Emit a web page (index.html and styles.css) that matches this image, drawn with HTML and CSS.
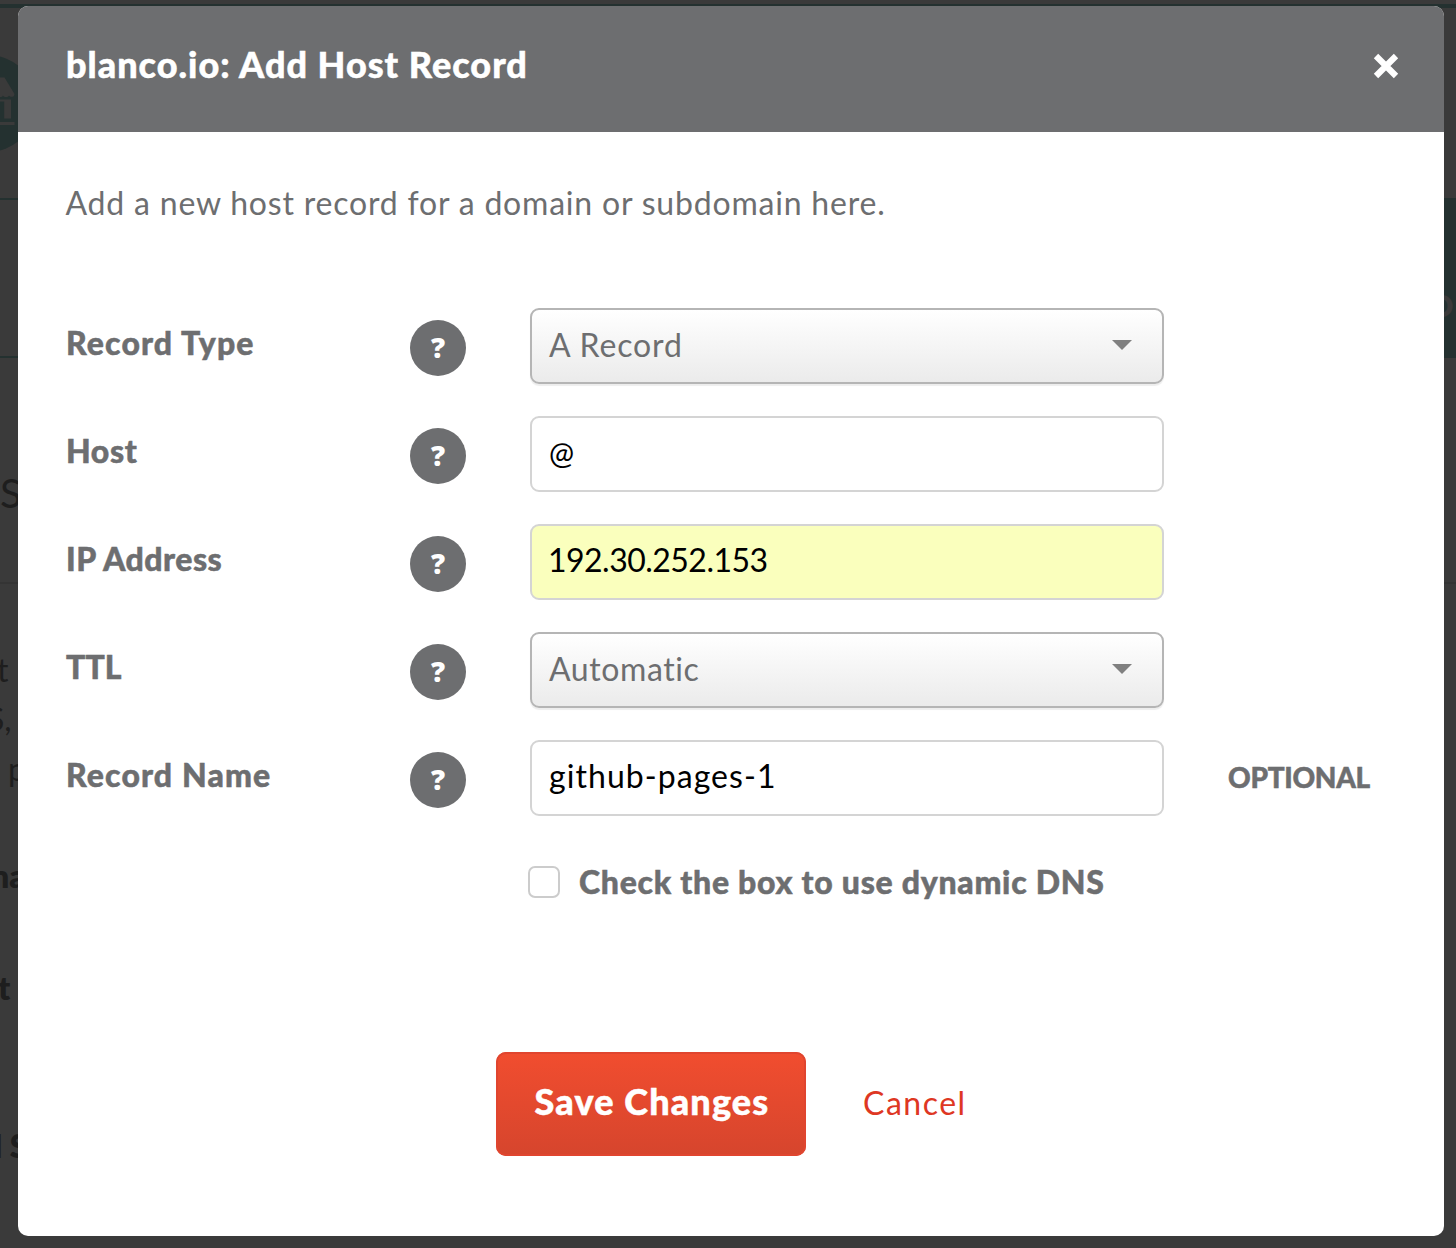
FILE: index.html
```html
<!DOCTYPE html>
<html lang="en">
<head>
<meta charset="utf-8">
<title>Add Host Record</title>
<link rel="stylesheet" href="styles.css">
</head>
<body>
<div class="page" aria-hidden="true">
  <div class="page-top">
    <svg class="shop" width="18" height="100" viewBox="0 0 18 100">
      <circle cx="-12" cy="49.5" r="48.4" fill="#243130"/>
      <path d="M-12 23.5H4.5L14.5 40C14.5 43.5 10 43.5 9 41.5C8 43.5 4 43.5 3 41.5C2 43.5-1 43.5-2 41.5H-12Z" fill="#3a3a3a"/>
      <path d="M-2 45.5H11V64.5H4.2V47.5H-2ZM-12 68H14.5V71H-12Z" fill="#3a3a3a"/>
    </svg>
  </div>
  <div class="page-tabs"><span class="page-tab">O&thinsp;M</span></div>
  <div class="page-title">S</div>
  <div class="page-text">
    <p class="line line-a">t</p>
    <p class="line line-b">S,</p>
    <p class="line line-c">p</p>
    <p class="line line-d">na</p>
    <p class="line line-e">t</p>
    <p class="line line-f">l S</p>
  </div>
</div>
<main class="modal" role="dialog">
  <header class="modal-head">
    <h1 class="title">blanco.io: Add Host Record</h1>
    <svg class="close" width="26" height="26" viewBox="0 0 26 26"><path d="M3 3L23 23M23 3L3 23" stroke="#fff" stroke-width="6.2"/></svg>
  </header>
  <div class="modal-body">
    <p class="intro">Add a new host record for a domain or subdomain here.</p>
    <form class="form">
      <div class="row">
        <label class="label wide">Record Type</label><span class="help">?</span>
        <div class="field select"><span class="value-a">A Record</span><svg width="20" height="10" viewBox="0 0 20 10"><path d="M0 0H20L10 10Z" fill="#808080"/></svg></div>
      </div>
      <div class="row">
        <label class="label host">Host</label><span class="help">?</span>
        <input class="field at" type="text" value="@">
      </div>
      <div class="row">
        <label class="label ip">IP Address</label><span class="help">?</span>
        <input class="field filled" type="text" value="192.30.252.153">
      </div>
      <div class="row">
        <label class="label ttl">TTL</label><span class="help">?</span>
        <div class="field select"><span class="value-b">Automatic</span><svg width="20" height="10" viewBox="0 0 20 10"><path d="M0 0H20L10 10Z" fill="#808080"/></svg></div>
      </div>
      <div class="row">
        <label class="label wide">Record Name</label><span class="help">?</span>
        <input class="field name" type="text" value="github-pages-1">
        <span class="optional">OPTIONAL</span>
      </div>
      <label class="check"><input class="box" type="checkbox"><span>Check the box to use dynamic DNS</span></label>
    </form>
    <div class="actions">
      <button class="save" type="button">Save Changes</button>
      <a class="cancel">Cancel</a>
    </div>
  </div>
</main>
</body>
</html>
```
FILE: styles.css
```css
* { box-sizing: border-box; }
body {
  margin: 0;
  width: 1456px;
  height: 1248px;
  overflow: hidden;
  position: relative;
  background: #3a3a3a;
  font-family: Lato, "Open Sans", sans-serif;
  color: #6d6e70;
}
p, h1 { margin: 0; }

/* dimmed page under the dialog */
.page { color: #1e1e1e; padding-top: 4px; height: 1248px; overflow: hidden; white-space: nowrap; }
.page-top { height: 196px; border-top: 4px solid #243130; border-bottom: 2px solid #243130; padding-top: 46px; }
.shop { display: block; }
.page-tabs { height: 158px; border-bottom: 2px solid #243130; display: flex; justify-content: flex-end; }
.page-tab {
  width: 12px;
  height: 160px;
  margin-top: -2px;
  overflow: hidden;
  background: #243130;
  color: #3a3a3a;
  font-size: 30px;
  font-weight: 800;
  line-height: 214px;
  text-indent: -15px;
}
.page-title { height: 226px; border-bottom: 2px solid #343434; font-size: 40px; line-height: 50px; padding-top: 110px; }
.page-text { display: flex; flex-direction: column; font-size: 32px; line-height: 40px; }
.line-a { margin: 66px 0 0 -3px; }
.line-b { margin: 9px 0 0 -13px; }
.line-c { margin: 10px 0 0 8px; }
.line-d, .line-e, .line-f { font-weight: 800; }
.line-d { margin: 67px 0 0 -9px; }
.line-e { margin: 72px 0 0 -2px; }
.line-f { margin: 118px 0 0 -6px; }

.modal {
  position: absolute;
  left: 18px;
  top: 6px;
  width: 1426px;
  height: 1230px;
  border-radius: 10px;
  overflow: hidden;
  background: #fff;
}
.modal-head {
  height: 126px;
  padding: 36px 45px 0 48px;
  display: flex;
  justify-content: space-between;
  align-items: flex-start;
  background: #6d6e70;
}
.title { font-size: 36px; line-height: 44px; font-weight: 900; letter-spacing: 1.01px; color: #fff; }
.title, .label, .check, .optional, .save { -webkit-text-stroke: .5px currentColor; }
.close { margin-top: 11px; }
.modal-body { padding: 51px 48px 0; }
.intro { font-size: 32px; line-height: 40px; letter-spacing: .8px; margin-left: -.5px; }
.form { margin-top: 85px; display: flex; flex-direction: column; gap: 32px; }
.row { height: 76px; display: flex; align-items: center; }
.label { width: 344px; padding-bottom: 7px; font-size: 32px; line-height: 40px; font-weight: 900; }
.wide { letter-spacing: 1.12px; }
.host { letter-spacing: .6px; }
.ip { letter-spacing: .5px; }
.ttl { letter-spacing: .1px; }
.help {
  width: 56px;
  height: 56px;
  margin: 4px 64px 0 0;
  border-radius: 50%;
  background: #6d6e70;
  color: #fff;
  font: 800 28px/55px "Open Sans", sans-serif;
  text-align: center;
}
.field {
  width: 634px;
  height: 76px;
  padding: 0 16px 5px 17px;
  border: 2px solid #d4d4d4;
  border-radius: 9px;
  background: #fff;
  color: #000;
  font: 400 32px/40px Lato, sans-serif;
  outline: 0;
}
.select {
  display: flex;
  align-items: center;
  justify-content: space-between;
  padding: 0 30px 2px 17px;
  border-color: #b5b5b5;
  background: linear-gradient(#fff, #ebebeb);
  box-shadow: 0 2px 1px rgba(0, 0, 0, .07);
  color: #6d6e70;
}
.value-a { letter-spacing: .87px; }
.value-b { letter-spacing: .6px; }
.at { font-size: 30px; padding-bottom: 4px; }
.filled { background: #faffbd; letter-spacing: -.52px; padding-left: 16px; }
.name { letter-spacing: 1.06px; }
.optional { margin-left: 64px; padding-bottom: 2px; font-size: 28px; line-height: 36px; font-weight: 900; letter-spacing: -.3px; }
.check {
  display: flex;
  align-items: center;
  gap: 19px;
  height: 40px;
  margin: 14px 0 0 462px;
  font-size: 32px;
  line-height: 40px;
  font-weight: 900;
  letter-spacing: .72px;
}
.box { appearance: none; width: 32px; height: 32px; margin: 0; border: 2px solid #ccc; border-radius: 7px; background: #fff; }
.actions { display: flex; align-items: center; margin: 150px 0 0 430px; }
.save {
  width: 310px;
  height: 104px;
  padding: 0 0 7px 2px;
  border: 0;
  border-radius: 10px;
  background: linear-gradient(#f14d2f, #d6452d);
  box-shadow: inset 0 0 0 2px #e0452f;
  color: #fff;
  font: 900 36px/44px Lato, sans-serif;
  letter-spacing: 1.15px;
}
.cancel { margin-left: 57px; padding-bottom: 3px; font-size: 32px; line-height: 40px; letter-spacing: 1.5px; color: #de3723; }
```
